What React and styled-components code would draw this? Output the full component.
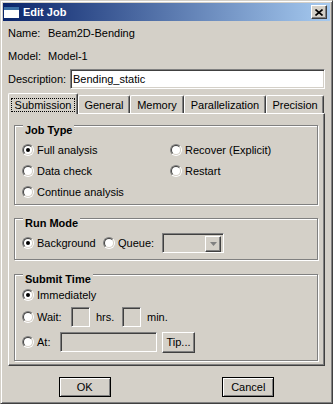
import React from "react";
import styled, { createGlobalStyle } from "styled-components";

const GlobalStyle = createGlobalStyle`
  html, body {
    margin: 0;
    padding: 0;
  }
  body {
    font-family: "Liberation Sans", Arial, sans-serif;
    font-size: 11px;
    color: #000;
    background: #d4d0c8;
  }
`;

const tabs = [
  { label: "Submission", width: 70, active: true },
  { label: "General", width: 52 },
  { label: "Memory", width: 54 },
  { label: "Parallelization", width: 82 },
  { label: "Precision", width: 58 },
];

function Radio({ checked }) {
  return (
    <RadioOuter>
      <RadioInner>{checked && <RadioDot />}</RadioInner>
    </RadioOuter>
  );
}

function RadioItem({ checked, label, width }) {
  return (
    <RadioLabel $width={width}>
      <Radio checked={checked} />
      <span>{label}</span>
    </RadioLabel>
  );
}

function App() {
  return (
    <>
      <GlobalStyle />
      <Window>
        <TitleBar>
          <svg width="15" height="11" viewBox="0 0 15 11">
            <rect x="0" y="0" width="15" height="11" fill="#ffffff" />
            <rect x="0" y="0" width="15" height="3" fill="#3a6ea5" />
          </svg>
          <TitleText>Edit Job</TitleText>
          <CloseButton>
            <svg width="8" height="7" viewBox="0 0 8 7">
              <path d="M0.5 0.5 L7.5 6.5 M7.5 0.5 L0.5 6.5" stroke="#000" strokeWidth="1.6" />
            </svg>
          </CloseButton>
        </TitleBar>

        <Content>
          <InfoRow>
            <Label $width={40}>Name:</Label>
            <span>Beam2D-Bending</span>
          </InfoRow>
          <InfoRow>
            <Label $width={40}>Model:</Label>
            <span>Model-1</span>
          </InfoRow>
          <InfoRow>
            <Label $width={62}>Description:</Label>
            <TextField>Bending_static</TextField>
          </InfoRow>

          <TabStrip>
            {tabs.map((t) => (
              <Tab key={t.label} $width={t.width} $active={t.active}>
                {t.active ? <FocusBox>{t.label}</FocusBox> : t.label}
              </Tab>
            ))}
          </TabStrip>

          <Panel>
            <Group>
              <Legend>Job Type</Legend>
              <JobGrid>
                <RadioItem checked label="Full analysis" />
                <RadioItem label="Recover (Explicit)" />
                <RadioItem label="Data check" />
                <RadioItem label="Restart" />
                <RadioItem label="Continue analysis" />
              </JobGrid>
            </Group>

            <Group $gap={13}>
              <Legend>Run Mode</Legend>
              <FieldRow $height={22} $top={2} $bottom={5}>
                <RadioItem checked label="Background" width={81} />
                <RadioItem label="Queue:" width={59} />
                <Combo>
                  <DropButton>
                    <svg width="7" height="4" viewBox="0 0 7 4">
                      <path d="M0 0 H7 L3.5 4 Z" fill="#808080" />
                    </svg>
                  </DropButton>
                </Combo>
              </FieldRow>
            </Group>

            <Group $gap={14}>
              <Legend>Submit Time</Legend>
              <FieldRow $height={21} $top={-2}>
                <RadioItem checked label="Immediately" />
              </FieldRow>
              <FieldRow $height={24}>
                <RadioItem label="Wait:" width={49} />
                <SmallField $width={19} />
                <Unit $width={32}>hrs.</Unit>
                <SmallField $width={19} />
                <Unit>min.</Unit>
              </FieldRow>
              <FieldRow $height={26} $bottom={5}>
                <RadioItem label="At:" width={38} />
                <SmallField $width={97} />
                <PushButton $width={33} $height={21} $gap={5}>
                  Tip...
                </PushButton>
              </FieldRow>
            </Group>
          </Panel>
        </Content>

        <Footer>
          <PushButton $width={52} $height={20} $framed>
            OK
          </PushButton>
          <PushButton $width={52} $height={20} $framed>
            Cancel
          </PushButton>
        </Footer>
      </Window>
    </>
  );
}

const sunken = `
  box-sizing: border-box;
  border: 1px solid;
  border-color: #808080 #ffffff #ffffff #808080;
  box-shadow: inset 1px 1px 0 #404040, inset -1px -1px 0 #d4d0c8;
`;

const raised = `
  box-sizing: border-box;
  background: #d4d0c8;
  border: 1px solid;
  border-color: #ffffff #404040 #404040 #ffffff;
  box-shadow: inset -1px -1px 0 #808080;
`;

const Window = styled.div`
  width: 333px;
  height: 404px;
  box-sizing: border-box;
  display: flex;
  flex-direction: column;
  padding: 2px;
  background: #d4d0c8;
  border: 1px solid;
  border-color: #d4d0c8 #404040 #404040 #d4d0c8;
  box-shadow: inset 1px 1px 0 #ffffff, inset -1px -1px 0 #808080;
`;

const TitleBar = styled.div`
  height: 18px;
  flex-shrink: 0;
  display: flex;
  align-items: center;
  padding: 0 3px 0 1px;
  background: linear-gradient(to right, #0a246a, #a6caf0);
  color: #ffffff;
  svg {
    flex-shrink: 0;
  }
`;

const TitleText = styled.span`
  margin-left: 4px;
  font-weight: bold;
  font-size: 11px;
`;

const CloseButton = styled.div`
  ${raised}
  margin-left: auto;
  width: 16px;
  height: 14px;
  display: flex;
  align-items: center;
  justify-content: center;
`;

const Content = styled.div`
  padding: 0 5px;
`;

const InfoRow = styled.div`
  height: 23px;
  display: flex;
  align-items: center;
`;

const Label = styled.span`
  width: ${(p) => p.$width}px;
  flex-shrink: 0;
`;

const TextField = styled.div`
  ${sunken}
  flex: 1;
  height: 20px;
  background: #ffffff;
  padding-left: 2px;
  display: flex;
  align-items: center;
`;

const TabStrip = styled.div`
  margin-top: 3px;
  height: 20px;
  display: flex;
  align-items: flex-end;
`;

const Tab = styled.div`
  box-sizing: border-box;
  width: ${(p) => p.$width}px;
  height: ${(p) => (p.$active ? 21 : 18)}px;
  margin-bottom: ${(p) => (p.$active ? -1 : 0)}px;
  position: relative;
  z-index: ${(p) => (p.$active ? 1 : 0)};
  display: flex;
  align-items: center;
  justify-content: center;
  background: #d4d0c8;
  border-top: 1px solid #ffffff;
  border-left: 1px solid #ffffff;
  border-right: 1px solid #404040;
  border-radius: 2px 2px 0 0;
  box-shadow: inset -1px 0 0 #808080;
`;

const FocusBox = styled.span`
  box-sizing: border-box;
  width: 64px;
  height: 14px;
  margin-top: 1px;
  border: 1px dotted #000;
  display: flex;
  align-items: center;
  justify-content: center;
`;

const Panel = styled.div`
  box-sizing: border-box;
  height: 253px;
  padding: 11px 6px 3px 5px;
  border: 1px solid;
  border-color: #ffffff #404040 #404040 #ffffff;
  box-shadow: inset -1px -1px 0 #808080;
`;

const Group = styled.div`
  display: flex;
  flex-direction: column;
  margin-top: ${(p) => p.$gap || 0}px;
  padding: 0 7px;
  border: 1px solid #808080;
  box-shadow: inset 1px 1px 0 #ffffff, 1px 1px 0 #ffffff;
`;

const Legend = styled.div`
  align-self: flex-start;
  height: 14px;
  line-height: 14px;
  margin: -3px 0 0 1px;
  padding: 0 2px;
  background: #d4d0c8;
  font-weight: bold;
`;

const JobGrid = styled.div`
  display: grid;
  grid-template-columns: 148px 1fr;
  grid-auto-rows: 21px;
  margin: 2px 0 2px;
`;

const FieldRow = styled.div`
  height: ${(p) => p.$height}px;
  margin-top: ${(p) => p.$top || 0}px;
  margin-bottom: ${(p) => p.$bottom || 0}px;
  display: flex;
  align-items: center;
`;

const RadioLabel = styled.label`
  display: flex;
  align-items: center;
  gap: 3px;
  width: ${(p) => (p.$width ? `${p.$width}px` : "auto")};
  flex-shrink: 0;
  white-space: nowrap;
`;

const RadioOuter = styled.span`
  box-sizing: border-box;
  width: 12px;
  height: 12px;
  border-radius: 50%;
  border: 1px solid;
  border-color: #808080 #ffffff #ffffff #808080;
  display: flex;
  flex-shrink: 0;
`;

const RadioInner = styled.span`
  box-sizing: border-box;
  width: 10px;
  height: 10px;
  border-radius: 50%;
  border: 1px solid;
  border-color: #404040 #d4d0c8 #d4d0c8 #404040;
  background: #ffffff;
  display: flex;
  align-items: center;
  justify-content: center;
`;

const RadioDot = styled.span`
  width: 4px;
  height: 4px;
  border-radius: 50%;
  background: #000;
`;

const Combo = styled.div`
  ${sunken}
  width: 62px;
  height: 20px;
  padding: 2px;
  background: #d4d0c8;
  display: flex;
  justify-content: flex-end;
`;

const DropButton = styled.div`
  ${raised}
  width: 16px;
  height: 16px;
  display: flex;
  align-items: center;
  justify-content: center;
`;

const SmallField = styled.div`
  ${sunken}
  width: ${(p) => p.$width}px;
  height: 20px;
  background: #d4d0c8;
`;

const Unit = styled.span`
  width: ${(p) => (p.$width ? `${p.$width}px` : "auto")};
  padding-left: 6px;
  box-sizing: border-box;
`;

const PushButton = styled.div`
  ${raised}
  width: ${(p) => p.$width}px;
  height: ${(p) => p.$height}px;
  margin-left: ${(p) => p.$gap || 0}px;
  display: flex;
  align-items: center;
  justify-content: center;
  ${(p) =>
    p.$framed &&
    `
    border-color: #000;
    box-shadow: inset 1px 1px 0 #ffffff, inset -1px -1px 0 #808080;
  `}
`;

const Footer = styled.div`
  height: 35px;
  box-sizing: border-box;
  padding-top: 11px;
  display: flex;
  justify-content: space-around;
  align-items: flex-start;
`;

export default App;
